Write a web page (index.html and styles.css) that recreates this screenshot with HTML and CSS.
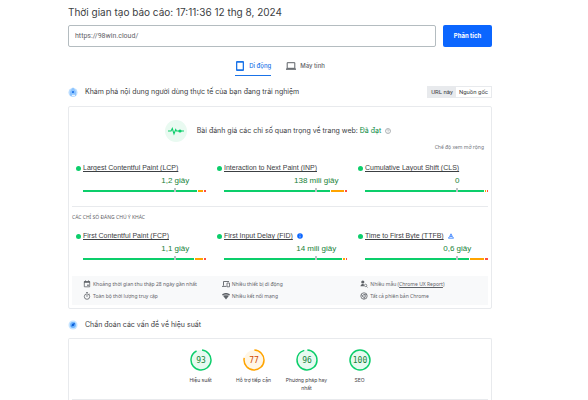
FILE: index.html
```html
<!DOCTYPE html>
<html lang="vi">
<head>
  <meta charset="UTF-8">
  <meta name="viewport" content="width=device-width, initial-scale=1.0">
  <title>PageSpeed Insights</title>
  <link rel="stylesheet" href="styles.css">
</head>
<body>
  <main class="page">
    <h1 class="report-time">Thời gian tạo báo cáo: 17:11:36 12 thg 8, 2024</h1>

    <!-- URL form -->
    <form class="url-form">
      <input class="url-input" type="text" value="https://98win.cloud/" aria-label="URL">
      <button class="analyze" type="button">Phân tích</button>
    </form>

    <!-- Device tabs -->
    <nav class="tabs">
      <button class="tab active" type="button">
        <svg class="tab-icon" viewBox="0 0 10 10"><path d="M2 0h6a1 1 0 0 1 1 1v8a1 1 0 0 1-1 1H2a1 1 0 0 1-1-1V1a1 1 0 0 1 1-1zm.3 1.8v6.4h5.4V1.8z" fill="currentColor" fill-rule="evenodd"/></svg>
        Di động
      </button>
      <button class="tab" type="button">
        <svg class="tab-icon" viewBox="0 0 10 10"><path d="M1.2 1.7h7.6v5.6H1.2z" fill="none" stroke="currentColor"/><path d="M0 7.4h10v1.4H0z" fill="currentColor"/></svg>
        Máy tính
      </button>
    </nav>

    <!-- Field data -->
    <header class="section-head">
      <svg class="section-icon" viewBox="0 0 10 10"><circle cx="5" cy="5.5" r="4.5" fill="#b9dcff"/><path d="M2 4.5 5 .3l3 4.2v4.2H2z" fill="#8cc4ff"/><circle cx="5" cy="5" r="1.1" fill="#1a6fe8"/><path d="M4 8.3h3" stroke="#fff"/></svg>
      <h2>Khám phá nội dung người dùng thực tế của bạn đang trải nghiệm</h2>
      <div class="scope">
        <button class="scope-btn selected" type="button">URL này</button>
        <button class="scope-btn" type="button">Nguồn gốc</button>
      </div>
    </header>

    <section class="card field">
      <div class="assessment">
        <svg class="pulse" viewBox="0 0 22 22"><circle cx="11" cy="11" r="11" fill="#e9faf1"/><path d="M3 11h3l1.3-2.5L9 13.8l1.7-4.3.8 1.5h7.5" fill="none" stroke="#0cce6b" stroke-width="1.1"/><circle cx="15" cy="11" r="1.6" fill="#0cce6b"/></svg>
        <p>Bài đánh giá các chỉ số quan trọng về trang web: <span class="passed">Đã đạt</span></p>
        <svg class="help" viewBox="0 0 6 6"><circle cx="3" cy="3" r="2.5" fill="none" stroke="#80868b" stroke-width=".6"/><path d="M2.1 2.5c0-1.2 1.8-1.1 1.8 0 0 .6-.9.6-.9 1.2M3 4.2v.5" fill="none" stroke="#80868b" stroke-width=".5"/></svg>
      </div>
      <button class="expand" type="button">Chế độ xem mở rộng</button>

      <div class="metrics">
        <div class="metric">
          <div class="metric-name"><a href="#lcp">Largest Contentful Paint (LCP)</a></div>
          <div class="metric-value">1,2 giây</div>
          <div class="bar"><i class="good" style="flex: 116"></i><i class="average" style="flex: 5"></i><i class="poor" style="flex: 2"></i></div>
        </div>
        <div class="metric">
          <div class="metric-name"><a href="#inp">Interaction to Next Paint (INP)</a></div>
          <div class="metric-value">138 mili giây</div>
          <div class="bar"><i class="good" style="flex: 107"></i><i class="average" style="flex: 13"></i><i class="poor" style="flex: 2"></i></div>
        </div>
        <div class="metric">
          <div class="metric-name"><a href="#cls">Cumulative Layout Shift (CLS)</a></div>
          <div class="metric-value">0</div>
          <div class="bar"><i class="good" style="flex: 120"></i><i class="average" style="flex: 1"></i><i class="poor" style="flex: 1"></i></div>
        </div>
      </div>

      <h3 class="other">CÁC CHỈ SỐ ĐÁNG CHÚ Ý KHÁC</h3>

      <div class="metrics">
        <div class="metric">
          <div class="metric-name"><a href="#fcp">First Contentful Paint (FCP)</a></div>
          <div class="metric-value">1,1 giây</div>
          <div class="bar"><i class="good" style="flex: 111"></i><i class="average" style="flex: 8"></i><i class="poor" style="flex: 2"></i></div>
        </div>
        <div class="metric">
          <div class="metric-name"><a href="#fid">First Input Delay (FID)</a>
            <svg class="badge" viewBox="0 0 6 6"><circle cx="3" cy="3" r="2.8" fill="#0b66ff"/><path d="M3 1.4v.6M3 2.6v2" stroke="#fff" stroke-width=".6"/></svg>
          </div>
          <div class="metric-value">14 mili giây</div>
          <div class="bar"><i class="good" style="flex: 119"></i><i class="average" style="flex: 2"></i><i class="poor" style="flex: 1"></i></div>
        </div>
        <div class="metric">
          <div class="metric-name"><a href="#ttfb">Time to First Byte (TTFB)</a>
            <svg class="badge" viewBox="0 0 6 6"><path d="M3 .8 4.2 3.4 5.6 5.2H.4L1.8 3.4zM1.8 3.4h2.4" fill="none" stroke="#0b66ff" stroke-width=".7"/></svg>
          </div>
          <div class="metric-value">0,6 giây</div>
          <div class="bar"><i class="good" style="flex: 104"></i><i class="average" style="flex: 14"></i><i class="poor" style="flex: 3"></i></div>
        </div>
      </div>

      <ul class="info">
        <li><svg viewBox="0 0 8 8"><path d="M1.3 1.6h5.4v5.2H1.3z" fill="none" stroke="currentColor" stroke-width=".8"/><path d="M1 1.2h6v1.6H1zM2 .4h1v1H2zM5 .4h1v1H5zM4.3 4.6h1.4V6H4.3z" fill="currentColor"/></svg>Khoảng thời gian thu thập 28 ngày gần nhất</li>
        <li><svg viewBox="0 0 8 8"><path d="M7 1.5H1.5v4.2M0 6.4h4.5" fill="none" stroke="currentColor" stroke-width=".9"/><path d="M5 3h2.5v3.8H5z" fill="none" stroke="currentColor" stroke-width=".8"/></svg>Nhiều thiết bị di động</li>
        <li><svg viewBox="0 0 8 8"><circle cx="2.8" cy="2" r="1.6" fill="currentColor"/><path d="M.5 6.2c0-2 2-2.4 3.2-2.2l.3 2.2z" fill="currentColor"/><circle cx="5.6" cy="5.4" r="1.2" fill="none" stroke="currentColor" stroke-width=".7"/><path d="m6.4 6.3 1.2 1.2" stroke="currentColor" stroke-width=".8"/></svg><span>Nhiều mẫu (<a href="#crux">Chrome UX Report</a>)</span></li>
        <li><svg viewBox="0 0 8 8"><circle cx="4" cy="4.6" r="2.7" fill="none" stroke="currentColor" stroke-width=".8"/><path d="M3 .6h2M4 2.9v2M6.2 1.9l.7.6" stroke="currentColor" stroke-width=".8"/></svg>Toàn bộ thời lượng truy cập</li>
        <li><svg viewBox="0 0 8 8"><path d="M0 2.6c2.3-2 5.7-2 8 0L4 7.4z" fill="currentColor"/><path d="M1 3.9c1.8-1.4 4.2-1.4 6 0" fill="none" stroke="#f8f9fa" stroke-width=".6"/></svg>Nhiều kết nối mạng</li>
        <li><svg viewBox="0 0 8 8"><circle cx="4" cy="4" r="3.2" fill="none" stroke="currentColor" stroke-width=".8"/><circle cx="4" cy="4" r="1.4" fill="none" stroke="currentColor" stroke-width=".7"/><path d="M4 2.6h3M2.7 4.6 1.3 2.3M5.2 4.8 3.8 7.2" stroke="currentColor" stroke-width=".7"/></svg>Tất cả phiên bản Chrome</li>
      </ul>
    </section>

    <!-- Lab data -->
    <header class="section-head diagnose">
      <svg class="section-icon" viewBox="0 0 10 10"><circle cx="5" cy="5" r="4.5" fill="#c4e3ff"/><circle cx="5" cy="5" r="2.9" fill="#6db5ff"/><path d="M3.4 6.6 4 4l3-1.2L6 5.8z" fill="#0b5fd8"/></svg>
      <h2>Chẩn đoán các vấn đề về hiệu suất</h2>
    </header>

    <section class="card lab">
      <div class="gauges">
        <a class="gauge pass" href="#performance">
          <svg viewBox="0 0 22 22"><circle class="ring" cx="11" cy="11" r="10" pathLength="100" stroke-dasharray="91 100" transform="rotate(-84 11 11)"/><text x="11" y="14">93</text></svg>
          Hiệu suất
        </a>
        <a class="gauge warn" href="#accessibility">
          <svg viewBox="0 0 22 22"><circle class="ring" cx="11" cy="11" r="10" pathLength="100" stroke-dasharray="78 100" transform="rotate(-88 11 11)"/><text x="11" y="14">77</text></svg>
          Hỗ trợ tiếp cận
        </a>
        <a class="gauge pass" href="#best-practices">
          <svg viewBox="0 0 22 22"><circle class="ring" cx="11" cy="11" r="10" pathLength="100" stroke-dasharray="95 100" transform="rotate(-88 11 11)"/><text x="11" y="14">96</text></svg>
          Phương pháp hay nhất
        </a>
        <a class="gauge pass" href="#seo">
          <svg viewBox="0 0 22 22"><circle class="ring" cx="11" cy="11" r="10"/><text x="11" y="14">100</text></svg>
          SEO
        </a>
      </div>
    </section>
  </main>
</body>
</html>
```
FILE: styles.css
```css
body {
  margin: 0;
  background: #fff;
  color: #3c4043;
  font-family: Inter, "Noto Sans", sans-serif;
  font-size: 7px;
  line-height: 10px;
}

h1, h2, h3, p, ul {
  margin: 0;
  padding: 0;
  font-weight: normal;
}

button {
  margin: 0;
  padding: 0;
  border: 0;
  background: none;
  color: inherit;
  font: inherit;
  cursor: pointer;
}

a {
  color: inherit;
}

.page {
  padding: 5px 96px 0 68px;
}

.report-time {
  font-size: 10px;
  line-height: 14px;
}

/* URL form */
.url-form {
  display: flex;
  gap: 7px;
  margin-top: 6px;
}

.url-input {
  flex: 1;
  min-width: 0;
  box-sizing: border-box;
  height: 22px;
  padding: 0 6px;
  border: 1px solid #b4bcc0;
  border-radius: 2px;
  color: #5f6368;
  font: 7px Roboto, sans-serif;
}

.analyze {
  width: 49px;
  border-radius: 2px;
  background: #0b66ff;
  color: #fff;
  font-size: 6px;
  font-weight: 700;
}

/* Device tabs */
.tabs {
  display: flex;
  justify-content: center;
  gap: 15px;
  margin-top: 9px;
}

.tab {
  display: flex;
  align-items: center;
  gap: 4px;
  height: 20px;
  box-sizing: border-box;
  border-bottom: 1px solid transparent;
  color: #5f6368;
  font-size: 6px;
  font-weight: 500;
}

.tab.active {
  border-color: #1a73e8;
  color: #1a73e8;
}

.tab-icon {
  width: 10px;
  height: 10px;
}

/* Section headings */
.section-head {
  display: flex;
  align-items: center;
  gap: 7px;
  height: 12px;
  margin: 10px 0 8px;
}

.section-head h2 {
  flex: 1;
  font-size: 7px;
}

.section-icon {
  width: 10px;
  height: 10px;
}

.scope {
  display: flex;
  border: 1px solid #e8eaed;
  font-family: Roboto, sans-serif;
}

.scope-btn {
  padding: 0 3px;
  font-size: 6px;
}

.scope-btn.selected {
  background: #e8eaed;
}

.card {
  border: 1px solid #e8eaed;
  border-radius: 2px;
}

/* Assessment */
.field {
  padding: 13px 3px 3px;
}

.assessment {
  display: flex;
  align-items: center;
  justify-content: center;
  height: 22px;
  padding-right: 4px;
}

.pulse {
  width: 22px;
  height: 22px;
  margin-right: 10px;
}

.passed {
  color: #0a8a3f;
}

.help {
  width: 6px;
  height: 6px;
  margin-left: 4px;
}

.expand {
  display: block;
  margin: 0 4px 0 auto;
  color: #70757a;
  font-family: "Noto Sans", sans-serif;
  font-size: 5px;
}

/* Metrics */
.metrics {
  display: grid;
  grid-template-columns: repeat(3, 1fr);
  gap: 11px;
  margin-top: 10px;
  padding-left: 4px;
}

.metric {
  padding-left: 7px;
  font-family: "Liberation Sans", Arial, sans-serif;
}

.metric-name {
  display: flex;
  align-items: center;
  height: 12px;
  font-size: 7px;
}

.metric-name::before {
  content: "";
  width: 5px;
  height: 5px;
  margin: 0 2px 0 -7px;
  border-radius: 50%;
  background: #0cce6b;
}

.badge {
  width: 6px;
  height: 6px;
  margin-left: 4px;
}

/* centred over the marker, which stands at three quarters of the bar */
.metric-value {
  height: 16px;
  margin-left: 50%;
  color: #178239;
  font-size: 8px;
  line-height: 14px;
  text-align: center;
  white-space: nowrap;
}

.bar {
  position: relative;
  display: flex;
  gap: 1px;
  height: 2px;
}

.bar::after {
  content: "";
  position: absolute;
  left: 74%;
  bottom: 0;
  width: 2px;
  height: 4px;
  background: #bdc1c6;
}

.good {
  background: #0cce6b;
}

.average {
  background: #ffa400;
}

.poor {
  background: #ff4e42;
}

.other {
  margin-top: 14px;
  padding-top: 5px;
  border-top: 1px solid #e8eaed;
  color: #5f6368;
  font-family: "Noto Sans", sans-serif;
  font-size: 5px;
}

.other + .metrics {
  margin-top: 8px;
}

/* Collection details */
.info {
  display: grid;
  grid-template-columns: repeat(3, 1fr);
  gap: 2px 11px;
  margin-top: 16px;
  padding: 3px 0 4px 11px;
  background: #f8f9fa;
  color: #5f6368;
  font-family: "Noto Sans", sans-serif;
  font-size: 5px;
  list-style: none;
}

.info li {
  display: flex;
  align-items: center;
  gap: 2px;
  white-space: nowrap;
}

.info svg {
  width: 8px;
  height: 8px;
}

/* Lab scores */
.diagnose {
  margin: 10px 0 7px;
}

.lab {
  padding: 10px 3px 0;
  border-bottom: 0;
  border-radius: 2px 2px 0 0;
}

.gauges {
  display: flex;
  justify-content: center;
  gap: 5px;
  padding-bottom: 7px;
  border-bottom: 1px solid #e8eaed;
}

.gauge {
  display: flex;
  flex-direction: column;
  align-items: center;
  gap: 5px;
  width: 48px;
  font-size: 5px;
  line-height: 8px;
  text-align: center;
  text-decoration: none;
}

.gauge svg {
  width: 22px;
  height: 22px;
}

.ring {
  fill: #e7faf0;
  stroke: #0cce6b;
  stroke-width: 1.5;
}

.gauge text {
  fill: #178239;
  font: 8px "DejaVu Sans Mono", monospace;
  text-anchor: middle;
}

.warn .ring {
  fill: #fff6e6;
  stroke: #ffa400;
}

.warn text {
  fill: #d04900;
}
```
